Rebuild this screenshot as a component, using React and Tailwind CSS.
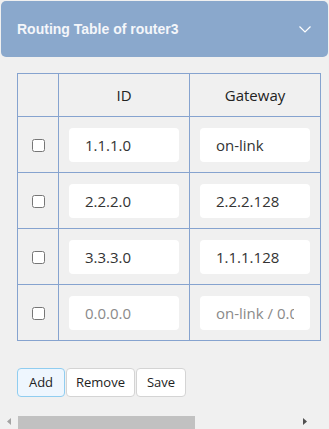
import React from "react";

const ROWS = [
   { id: "1.1.1.0", gw: "on-link" },
   { id: "2.2.2.0", gw: "2.2.2.128" },
   { id: "3.3.3.0", gw: "1.1.1.128" },
   { id: "", gw: "" },
];

export default function App() {
   return (
      <div className="w-[329px] h-[429px] bg-[#f0f0f0] flex flex-col overflow-hidden" style={{ fontFamily: "'Open Sans', 'Noto Sans', sans-serif" }}>
         {/* CABECERA */}
         <div className="mx-[1px] mt-[1px] h-[56px] shrink-0 bg-[#8aa8cc] rounded-[5px] flex items-center justify-between pl-4 pr-[17px]">
            <span className="text-[14px] font-bold text-[#f4f6fa]" style={{ fontFamily: "'Liberation Sans', Arial, sans-serif" }}>
               Routing Table of router3
            </span>
            <svg width="12" height="7" viewBox="0 0 12 7" fill="none">
               <path d="M0.5 0.5 L6 6 L11.5 0.5" stroke="#ffffff" strokeWidth="1.2" />
            </svg>
         </div>

         {/* TABLA */}
         <div className="pl-[17px] pt-[16px]">
            <table className="border-collapse text-[15px] text-[#222]">
               <thead>
                  <tr className="h-[43px]">
                     <th className="w-[41px] border border-[#86a3cf]"></th>
                     <th className="w-[131px] border border-[#86a3cf] font-normal">ID</th>
                     <th className="w-[131px] border border-[#86a3cf] font-normal">Gateway</th>
                  </tr>
               </thead>
               <tbody>
                  {ROWS.map((r, i) => (
                     <tr key={i} className="h-[56px]">
                        <td className="border border-[#86a3cf] text-center align-middle">
                           <input type="checkbox" className="w-[13px] h-[13px] align-middle ml-[1px] mt-[-2px]" />
                        </td>
                        <td className="border border-[#86a3cf] pl-[10px]">
                           <input
                              defaultValue={r.id}
                              placeholder="0.0.0.0"
                              className="w-[110px] h-[34px] bg-white rounded-[4px] pl-4 pr-4 text-[15px] text-[#333] placeholder:text-[#8a8a8a] outline-none"
                           />
                        </td>
                        <td className="border border-[#86a3cf] pl-[10px]">
                           <input
                              defaultValue={r.gw}
                              placeholder="on-link / 0.0.0.0"
                              className="w-[110px] h-[34px] bg-white rounded-[4px] pl-4 pr-4 text-[15px] text-[#333] placeholder:text-[#8a8a8a] outline-none"
                           />
                        </td>
                     </tr>
                  ))}
               </tbody>
            </table>
         </div>

         {/* BOTONES */}
         <div className="flex gap-[1px] pl-[17px] mt-[27px] text-[13px] text-[#222]">
            <button className="h-[29px] w-[48px] bg-[#eef6fe] border border-[#90cdf0] rounded-[4px]">Add</button>
            <button className="h-[29px] w-[69px] bg-white border border-[#d4d4d4] rounded-[4px]">Remove</button>
            <button className="h-[29px] w-[50px] bg-white border border-[#d4d4d4] rounded-[4px]">Save</button>
         </div>

         {/* BARRA DE DESPLAZAMIENTO */}
         <div className="mt-auto h-[15px] flex items-center">
            <div className="w-[18px] h-full flex items-center justify-center pb-[1px]">
               <svg width="4" height="7" viewBox="0 0 4 7">
                  <path d="M4 0 L0 3.5 L4 7 Z" fill="#a3a3a3" />
               </svg>
            </div>
            <div className="w-[177px] h-[13px] self-end bg-[#c1c1c1]"></div>
            <div className="flex-1"></div>
            <div className="w-[15px] h-full flex items-center justify-start mr-[11px] pb-[1px]">
               <svg width="4" height="7" viewBox="0 0 4 7">
                  <path d="M0 0 L4 3.5 L0 7 Z" fill="#505050" />
               </svg>
            </div>
         </div>
      </div>
   );
}
